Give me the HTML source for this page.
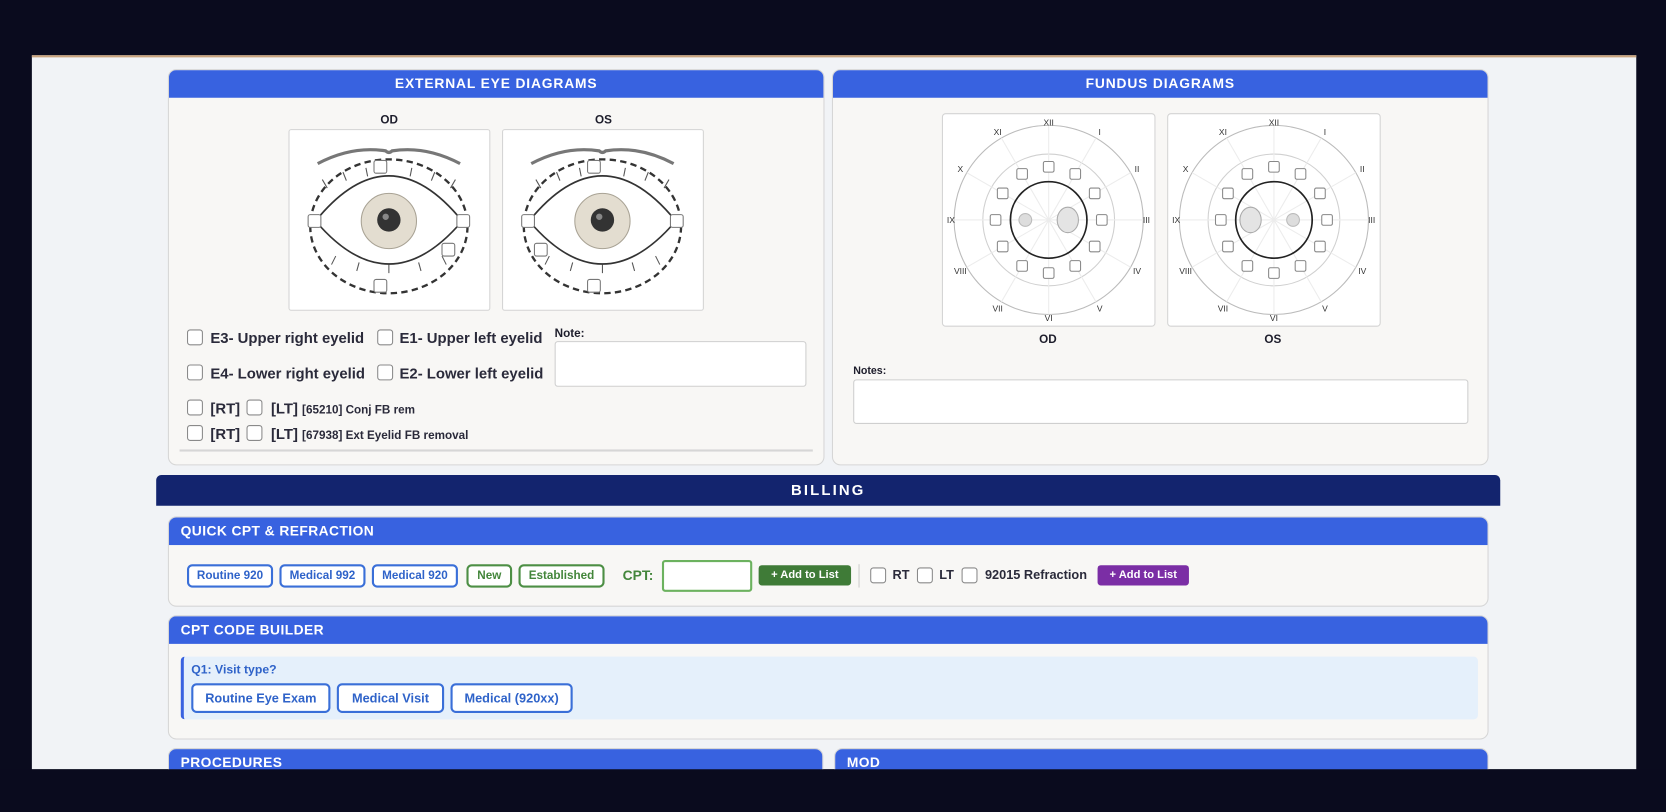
<!DOCTYPE html>
<html><head><meta charset="utf-8">
<style>
html,body{margin:0;padding:0;background:#0a0b1e;width:1666px;height:812px;overflow:hidden}
#w{position:absolute;left:0;top:0;width:1568px;height:764px;transform:scale(1.0625);transform-origin:0 0;font-family:"Liberation Sans",Arial,sans-serif;color:#1d1d2b}
.a{position:absolute}
#content{left:30px;top:52px;width:1510px;height:672px;background:#f1f3f6;border-top:2px solid #c9a47e;box-sizing:border-box}
.panel{position:absolute;background:#f8f7f5;border:1px solid #d6d6d6;border-radius:8px;overflow:hidden;box-sizing:border-box}
.hd{background:#3862e0;color:#fff;font-weight:bold;font-size:13px;letter-spacing:.8px;height:26px;line-height:26px}
.hd.c{text-align:center}
.hd.l{padding-left:11px;letter-spacing:.4px}
.cb{position:absolute;width:15px;height:15px;border:1px solid #8a8a8a;border-radius:3px;background:#fff;box-sizing:border-box}
.lbl{position:absolute;font-size:14px;font-weight:bold;color:#2a2a3a;white-space:nowrap}
.ta{position:absolute;background:#fff;border:1px solid #cfcfcf;border-radius:3px;box-sizing:border-box}
.btn{position:absolute;box-sizing:border-box;border:2px solid #3a6fd8;border-radius:5px;background:#fff;color:#2f63c9;font-size:11px;font-weight:bold;text-align:center}
.g{border-color:#4d8f45;color:#43863b}
</style></head><body><div id="w">
<div class="a" id="content"></div>

<!-- External eye -->
<div class="panel" style="left:158px;top:65px;width:618px;height:373px">
<div class="hd c">EXTERNAL EYE DIAGRAMS</div>
<div class="a" style="left:199px;top:41px;font-size:11px;font-weight:bold">OD</div>
<div class="a" style="left:401px;top:41px;font-size:11px;font-weight:bold">OS</div>
<svg class="a" style="left:112px;top:55px" width="192" height="173" id="e1"></svg>
<svg class="a" style="left:313px;top:55px" width="192" height="173" id="e2"></svg>
<div class="cb" style="left:17px;top:244px"></div><div class="lbl" style="left:39px;top:244px">E3- Upper right eyelid</div>
<div class="cb" style="left:196px;top:244px"></div><div class="lbl" style="left:217px;top:244px">E1- Upper left eyelid</div>
<div class="cb" style="left:17px;top:277px"></div><div class="lbl" style="left:39px;top:277px">E4- Lower right eyelid</div>
<div class="cb" style="left:196px;top:277px"></div><div class="lbl" style="left:217px;top:277px">E2- Lower left eyelid</div>
<div class="a" style="left:363px;top:242px;font-size:11px;font-weight:bold">Note:</div>
<div class="ta" style="left:363px;top:255px;width:237px;height:43px"></div>
<div class="cb" style="left:17px;top:310px"></div><div class="lbl" style="left:39px;top:310px">[RT]</div>
<div class="cb" style="left:73px;top:310px"></div><div class="lbl" style="left:96px;top:310px">[LT] <span style="font-size:11px">[65210] Conj FB rem</span></div>
<div class="cb" style="left:17px;top:334px"></div><div class="lbl" style="left:39px;top:334px">[RT]</div>
<div class="cb" style="left:73px;top:334px"></div><div class="lbl" style="left:96px;top:334px">[LT] <span style="font-size:11px">[67938] Ext Eyelid FB removal</span></div>
<div class="a" style="left:10px;top:357px;width:596px;height:2px;background:#d6d6d6"></div>
</div>

<!-- Fundus -->
<div class="panel" style="left:783px;top:65px;width:618px;height:373px">
<div class="hd c">FUNDUS DIAGRAMS</div>
<svg class="a" style="left:102px;top:40px" width="202" height="202" id="f1"></svg>
<svg class="a" style="left:314px;top:40px" width="202" height="202" id="f2"></svg>
<div class="a" style="left:194px;top:248px;font-size:11px;font-weight:bold">OD</div>
<div class="a" style="left:406px;top:248px;font-size:11px;font-weight:bold">OS</div>
<div class="a" style="left:19px;top:278px;font-size:10px;font-weight:bold">Notes:</div>
<div class="ta" style="left:19px;top:291px;width:579px;height:42px"></div>
</div>

<!-- Billing -->
<div class="a" style="left:147px;top:447px;width:1265px;height:29px;background:#13246e;border-radius:5px 5px 0 0;color:#fff;font-weight:bold;font-size:14px;letter-spacing:2px;text-align:center;line-height:29px">BILLING</div>

<div class="panel" style="left:158px;top:486px;width:1243px;height:85px">
<div class="hd l">QUICK CPT &amp; REFRACTION</div>
<div class="btn" style="left:17px;top:44px;width:81px;height:22px;line-height:18px">Routine 920</div>
<div class="btn" style="left:104px;top:44px;width:81px;height:22px;line-height:18px">Medical 992</div>
<div class="btn" style="left:191px;top:44px;width:81px;height:22px;line-height:18px">Medical 920</div>
<div class="btn g" style="left:280px;top:44px;width:43px;height:22px;line-height:18px">New</div>
<div class="btn g" style="left:329px;top:44px;width:81px;height:22px;line-height:18px">Established</div>
<div class="a" style="left:427px;top:47px;font-size:13px;font-weight:bold;color:#43863b">CPT:</div>
<div class="a" style="left:464px;top:40px;width:85px;height:30px;border:2px solid #6cb25f;border-radius:3px;background:#fff;box-sizing:border-box"></div>
<div class="a" style="left:555px;top:45px;width:87px;height:19px;background:#3f7b37;border-radius:3px;color:#fff;font-size:10.5px;font-weight:bold;text-align:center;line-height:19px">+ Add to List</div>
<div class="a" style="left:649px;top:44px;width:1px;height:22px;background:#ccc"></div>
<div class="cb" style="left:660px;top:47px"></div><div class="lbl" style="left:681px;top:47px;font-size:12px">RT</div>
<div class="cb" style="left:704px;top:47px"></div><div class="lbl" style="left:725px;top:47px;font-size:12px">LT</div>
<div class="cb" style="left:746px;top:47px"></div><div class="lbl" style="left:768px;top:47px;font-size:12px">92015 Refraction</div>
<div class="a" style="left:874px;top:45px;width:86px;height:19px;background:#7b2ea5;border-radius:3px;color:#fff;font-size:10.5px;font-weight:bold;text-align:center;line-height:19px">+ Add to List</div>
</div>

<div class="panel" style="left:158px;top:579px;width:1243px;height:117px">
<div class="hd l">CPT CODE BUILDER</div>
<div class="a" style="left:11px;top:38px;width:1221px;height:59px;background:#e5f0fb;border-left:3px solid #3862e0;border-radius:4px;box-sizing:border-box"></div>
<div class="a" style="left:21px;top:45px;font-size:11.5px;font-weight:bold;color:#2f63c9">Q1: Visit type?</div>
<div class="btn" style="left:21px;top:63px;width:131px;height:28px;line-height:24px;font-size:12px">Routine Eye Exam</div>
<div class="btn" style="left:158px;top:63px;width:101px;height:28px;line-height:24px;font-size:12px">Medical Visit</div>
<div class="btn" style="left:265px;top:63px;width:115px;height:28px;line-height:24px;font-size:12px">Medical (920xx)</div>
</div>

<div class="panel" style="left:158px;top:704px;width:617px;height:40px;border-bottom:none"><div class="hd l">PROCEDURES</div></div>
<div class="panel" style="left:785px;top:704px;width:616px;height:40px;border-bottom:none"><div class="hd l">MOD</div></div>

<div class="a" style="left:0;top:724px;width:1568px;height:40px;background:#0a0b1e"></div>
</div>
<script>
function eye(id,od){var h='<rect x="1" y="1" width="189" height="170" fill="#fff" stroke="#d4d4d4" rx="2"/>'+
'<path d="M28,33 Q60,16 92,21 Q95,24 98,21 Q130,16 162,33" fill="none" stroke="#777" stroke-width="3"/>'+
'<ellipse cx="95" cy="92" rx="74" ry="63" fill="none" stroke="#333" stroke-width="2.2" stroke-dasharray="6,4"/>';
var L='';[[-58,44],[-40,37],[-20,33],[20,33],[40,37],[58,44]].forEach(function(p){var x=95+p[0];L+='<line x1="'+x+'" y1="'+(p[1]+12)+'" x2="'+(x+p[0]*0.08)+'" y2="'+(p[1]+4)+'"/>';});
[[-50,120],[-28,126],[0,128],[28,126],[50,120]].forEach(function(p){var x=95+p[0];L+='<line x1="'+x+'" y1="'+(p[1])+'" x2="'+(x+p[0]*0.08)+'" y2="'+(p[1]+8)+'"/>';});
h+='<g stroke="#555" stroke-width="1">'+L+'</g>';
h+='<path d="M26,87 Q95,2 164,87 Q95,168 26,87 Z" fill="#fff" stroke="#333" stroke-width="1.6"/>';
h+='<circle cx="95" cy="87" r="26" fill="#e3ddd0" stroke="#a9a395"/><circle cx="95" cy="86" r="11" fill="#333"/><circle cx="92" cy="83" r="3" fill="#888"/>';
var lx=od?145:31;h+='<g fill="#fff" stroke="#777"><rect x="81" y="30" width="12" height="12" rx="2"/><rect x="19" y="81" width="12" height="12" rx="2"/><rect x="159" y="81" width="12" height="12" rx="2"/><rect x="81" y="142" width="12" height="12" rx="2"/><rect x="'+lx+'" y="108" width="12" height="12" rx="2"/></g>';
document.getElementById(id).innerHTML=h;}
eye('e1',true);eye('e2',false);
function fundus(id,od){var s=document.getElementById(id),h='<rect x="1" y="1" width="200" height="200" rx="3" fill="#fff" stroke="#d4d4d4"/>';
var cx=101,cy=101;h+='<circle cx="101" cy="101" r="89" fill="none" stroke="#bbb"/><circle cx="101" cy="101" r="62" fill="none" stroke="#d0d0d0"/>';
var R=['XII','I','II','III','IV','V','VI','VII','VIII','IX','X','XI'];
for(var i=0;i<12;i++){var a=(i*30-90)*Math.PI/180,c=Math.cos(a),sn=Math.sin(a);
h+='<line x1="101" y1="101" x2="'+(cx+89*c)+'" y2="'+(cy+89*sn)+'" stroke="#ececec"/>';
var tr=(i%3==0)?92:96;h+='<text x="'+(cx+tr*c)+'" y="'+(cy+tr*sn+3)+'" font-size="8" fill="#333" text-anchor="middle" font-family="Liberation Sans">'+R[i]+'</text>';
var sx=cx+50*c,sy=cy+50*sn;h+='<rect x="'+(sx-5)+'" y="'+(sy-5)+'" width="10" height="10" rx="1.5" fill="#fff" stroke="#888"/>';}
h+='<circle cx="101" cy="101" r="36" fill="none" stroke="#222" stroke-width="1.6"/>';
var d=od?119:79,m=od?79:119;h+='<ellipse cx="'+d+'" cy="101" rx="10" ry="12" fill="#e4e4e4" stroke="#aaa"/><circle cx="'+m+'" cy="101" r="6" fill="#ddd" stroke="#bbb"/>';
s.innerHTML=h;}
fundus('f1',true);fundus('f2',false);
</script>
</body></html>
